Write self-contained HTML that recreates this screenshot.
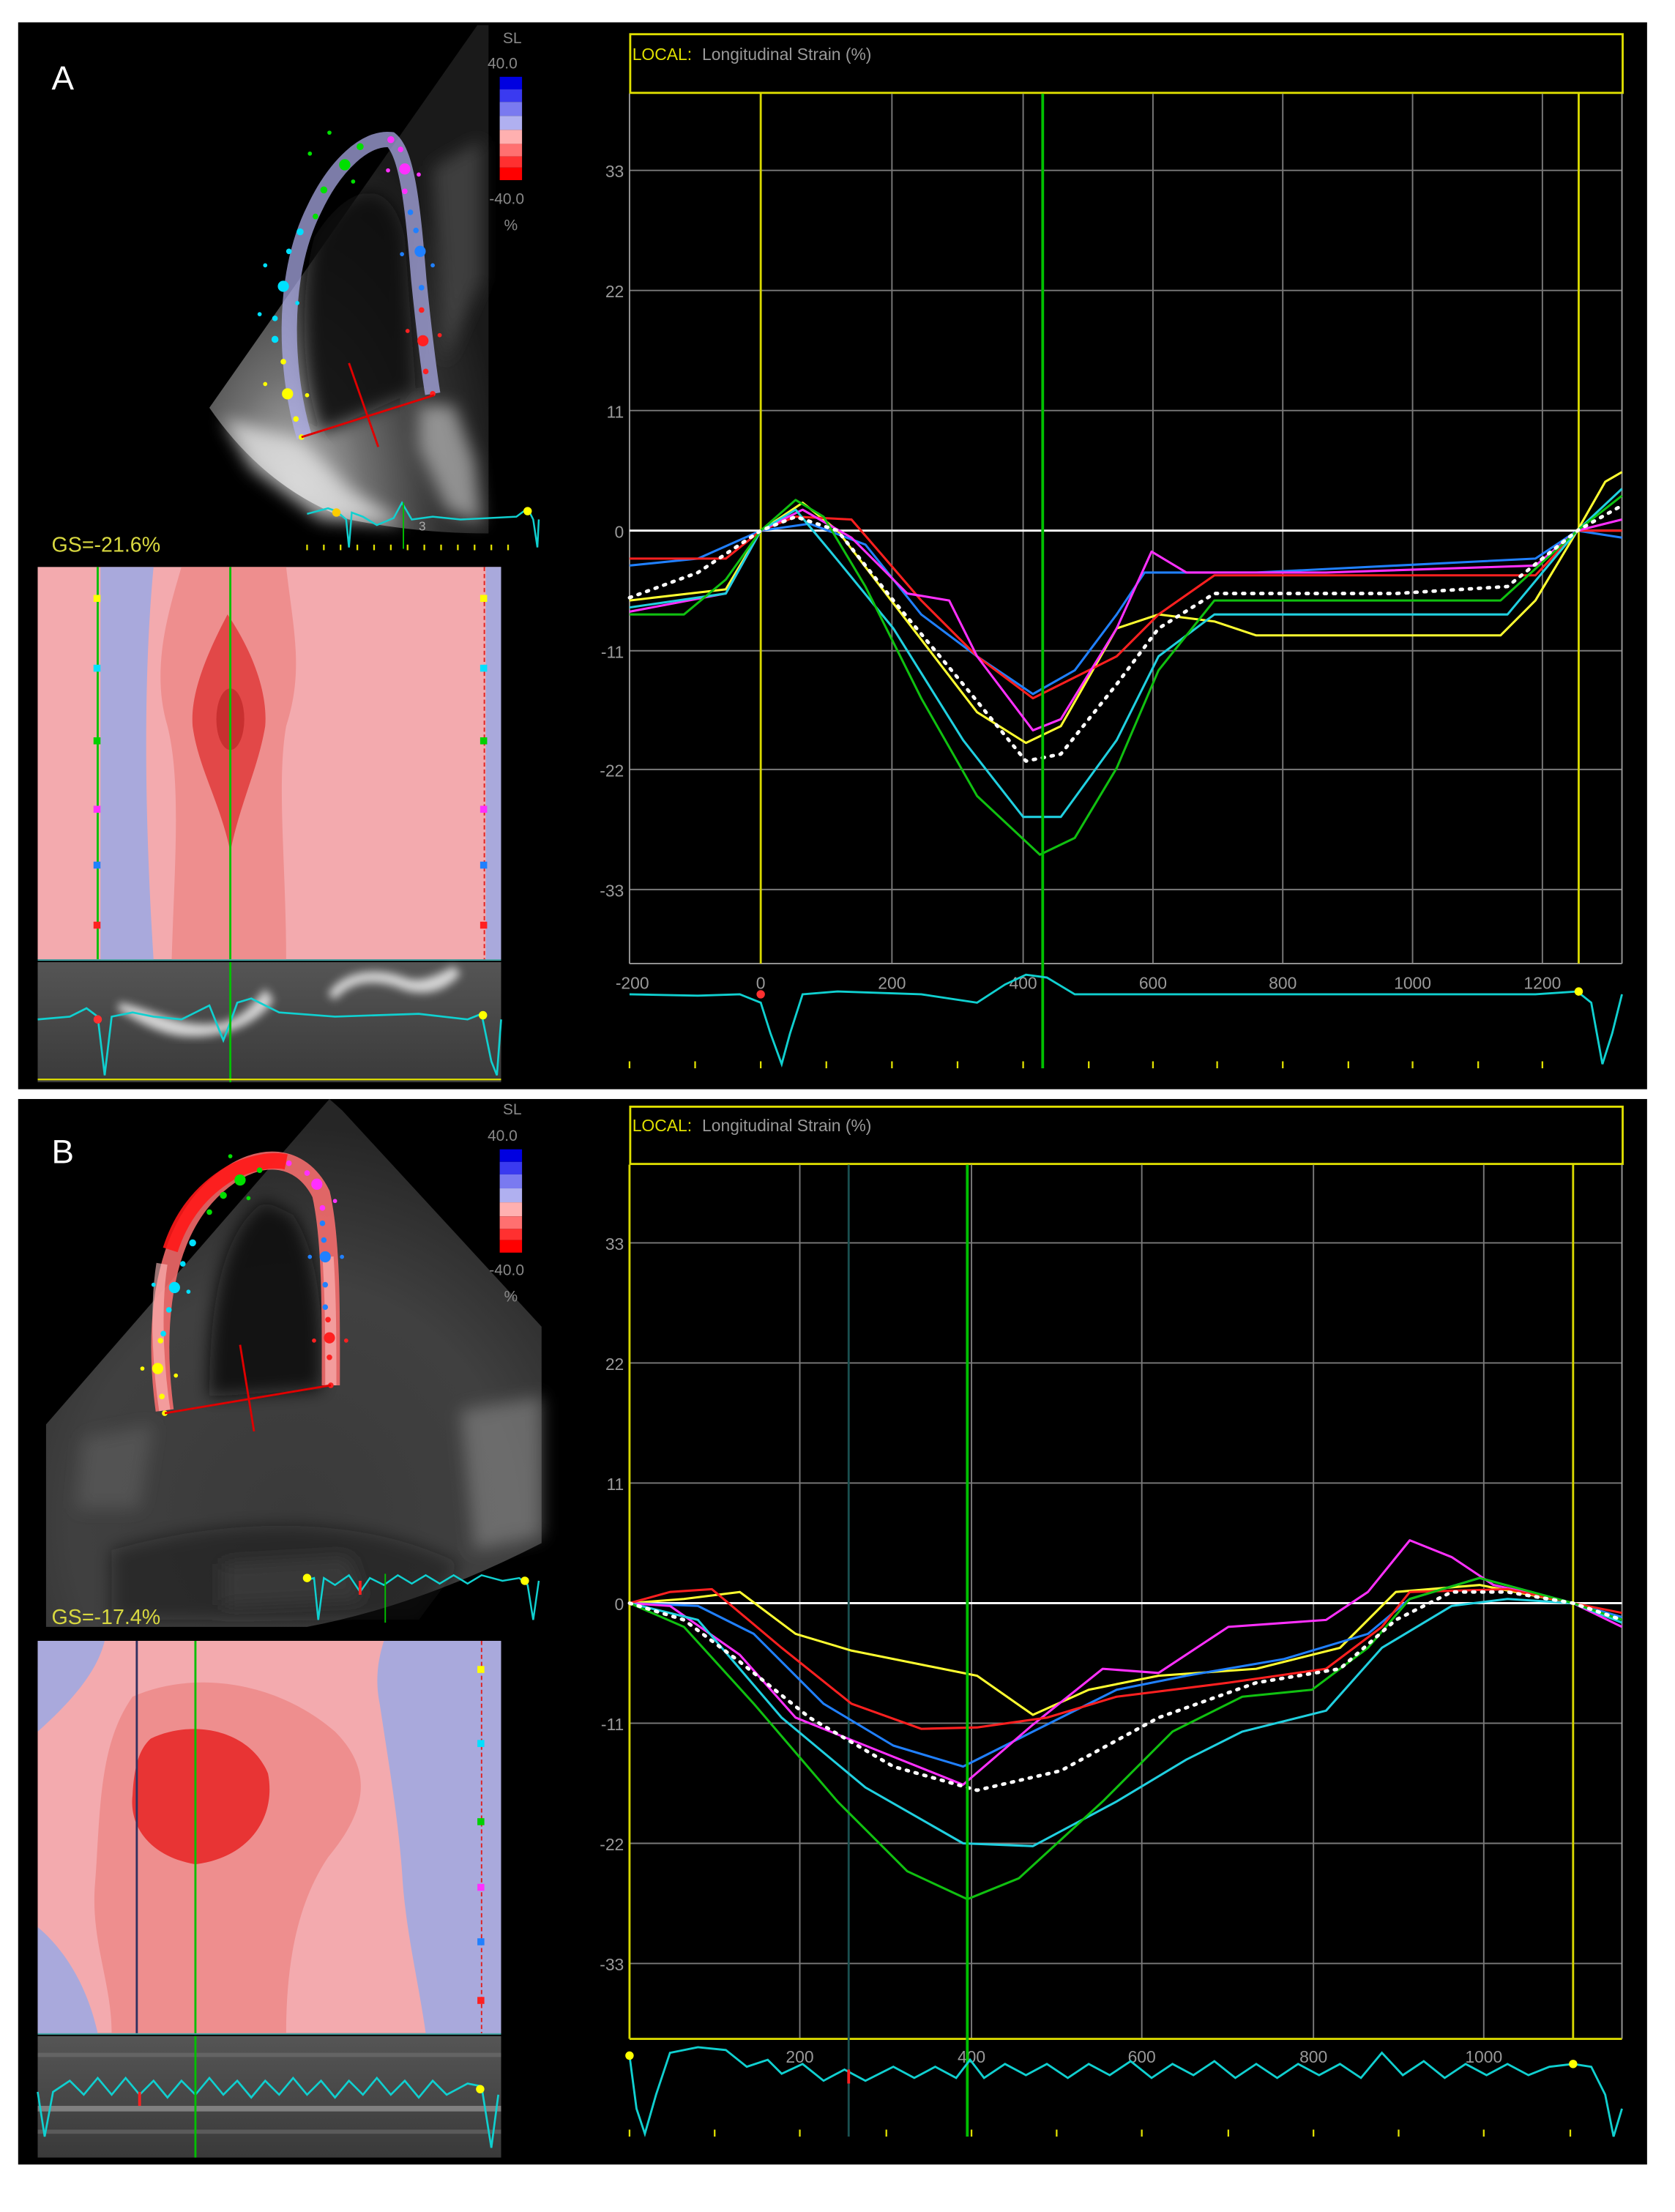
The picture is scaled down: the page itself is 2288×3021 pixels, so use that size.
<!DOCTYPE html>
<html><head><meta charset="utf-8"><style>
html,body{margin:0;padding:0;background:#fff;}
svg{display:block;}
text{font-family:"Liberation Sans",sans-serif;}
</style></head><body>
<svg width="2288" height="3021" viewBox="0 0 1200 1584" preserveAspectRatio="none" xmlns="http://www.w3.org/2000/svg">
<defs>
<radialGradient id="echoA" cx="0.3" cy="0.95" r="0.75">
<stop offset="0" stop-color="#c8c8c8"/><stop offset="0.35" stop-color="#707070"/><stop offset="0.7" stop-color="#333"/><stop offset="1" stop-color="#1a1a1a"/></radialGradient>
<radialGradient id="echoB" cx="0.5" cy="0.8" r="0.75">
<stop offset="0" stop-color="#3a3a3a"/><stop offset="0.6" stop-color="#404040"/><stop offset="1" stop-color="#262626"/></radialGradient>
<linearGradient id="mm" x1="0" y1="0" x2="0" y2="1"><stop offset="0" stop-color="#555"/><stop offset="1" stop-color="#3a3a3a"/></linearGradient>
<filter id="blur3"><feGaussianBlur stdDeviation="3"/></filter>
<filter id="blur6"><feGaussianBlur stdDeviation="6"/></filter>
</defs>
<rect width="1200" height="1584" fill="#fff"/>
<rect x="13" y="16" width="1167" height="764" fill="#000"/>
<rect x="13" y="787" width="1167" height="763" fill="#000"/>

<!-- ===== A left ===== -->
<text x="37" y="64" font-family="Liberation Serif" font-size="24" fill="#fff">A</text>
<path d="M342,18 L350,18 L350,382 Q300,382 250,372 Q190,350 150,292 Z" fill="url(#echoA)"/>
<g filter="url(#blur6)">
<path d="M160,300 L215,315 L250,350 L290,375 L230,372 L180,335 Z" fill="#e0e0e0" opacity="0.8"/>
<path d="M300,290 L325,290 L340,330 L345,375 L320,365 L300,320 Z" fill="#bbb" opacity="0.7"/>
<path d="M225,170 C250,130 280,125 290,170 L298,280 L230,310 C215,270 215,210 225,170 Z" fill="#0c0c0c" opacity="0.9"/>
<path d="M310,120 L345,100 L345,200 L318,260 Z" fill="#555" opacity="0.6"/>
</g>
<path d="M218,313 C205,270 200,200 225,150 C240,118 262,98 280,100 C292,110 296,150 300,200 C304,240 308,270 310,282" fill="none" stroke="#b0b0f0" stroke-width="11" opacity="0.7"/>
<g fill="#00e000"><circle cx="247" cy="118" r="4"/><circle cx="232" cy="136" r="2.5"/><circle cx="258" cy="105" r="2.5"/><circle cx="226" cy="155" r="2"/><circle cx="236" cy="95" r="1.5"/><circle cx="222" cy="110" r="1.5"/><circle cx="253" cy="130" r="1.5"/></g>
<g fill="#ff30ff"><circle cx="290" cy="121" r="4"/><circle cx="280" cy="100" r="2.5"/><circle cx="287" cy="107" r="2"/><circle cx="290" cy="137" r="2"/><circle cx="300" cy="125" r="1.5"/><circle cx="278" cy="122" r="1.5"/></g>
<g fill="#00e0ff"><circle cx="203" cy="205" r="4"/><circle cx="215" cy="166" r="2.5"/><circle cx="207" cy="180" r="2"/><circle cx="197" cy="228" r="2"/><circle cx="197" cy="243" r="2.5"/><circle cx="190" cy="190" r="1.5"/><circle cx="186" cy="225" r="1.5"/><circle cx="213" cy="217" r="1.5"/></g>
<g fill="#2080ff"><circle cx="301" cy="180" r="4"/><circle cx="294" cy="152" r="2"/><circle cx="298" cy="165" r="2"/><circle cx="302" cy="206" r="2"/><circle cx="310" cy="190" r="1.5"/><circle cx="288" cy="182" r="1.5"/></g>
<g fill="#ff2020"><circle cx="303" cy="244" r="4"/><circle cx="302" cy="222" r="2"/><circle cx="305" cy="266" r="2"/><circle cx="310" cy="282" r="2"/><circle cx="292" cy="237" r="1.5"/><circle cx="315" cy="240" r="1.5"/></g>
<g fill="#ffff00"><circle cx="206" cy="282" r="4"/><circle cx="203" cy="259" r="2"/><circle cx="212" cy="300" r="2"/><circle cx="216" cy="313" r="2"/><circle cx="190" cy="275" r="1.5"/><circle cx="220" cy="283" r="1.5"/></g>
<line x1="216" y1="313" x2="311" y2="283" stroke="#e00000" stroke-width="1.5"/>
<line x1="250" y1="260" x2="271" y2="320" stroke="#e00000" stroke-width="1.5"/>
<text x="367" y="31" font-size="11" fill="#888" text-anchor="middle">SL</text>
<text x="360" y="49" font-size="11" fill="#888" text-anchor="middle">40.0</text>
<rect x="358" y="55" width="16" height="9" fill="#0000e0"/><rect x="358" y="64" width="16" height="9" fill="#3a3af0"/><rect x="358" y="73" width="16" height="10" fill="#7a7af0"/><rect x="358" y="83" width="16" height="10" fill="#b0b0f0"/>
<rect x="358" y="93" width="16" height="10" fill="#ffb0b0"/><rect x="358" y="103" width="16" height="9" fill="#ff7070"/><rect x="358" y="112" width="16" height="8" fill="#ff3030"/><rect x="358" y="120" width="16" height="9" fill="#ff0000"/>
<text x="363" y="146" font-size="11" fill="#888" text-anchor="middle">-40.0</text>
<text x="366" y="165" font-size="11" fill="#888" text-anchor="middle">%</text>
<polyline points="220,368 235,364 241,366 248,372 250,392 252,367 260,370 270,376 282,371 288,360 295,372 310,370 330,372 370,370 378,364 382,372 385,392 386,372" fill="none" stroke="#10d0d0" stroke-width="1.3"/>
<line x1="289" y1="360" x2="289" y2="393" stroke="#00c000"/>
<text x="300" y="380" font-size="9" fill="#aaa">3</text>
<circle cx="241" cy="367" r="3" fill="#ffcc00"/><circle cx="378" cy="366" r="3" fill="#ffff00"/>
<g stroke="#e0e000" stroke-width="1.2"><line x1="220" y1="390" x2="220" y2="394"/><line x1="232" y1="390" x2="232" y2="394"/><line x1="244" y1="390" x2="244" y2="394"/><line x1="256" y1="390" x2="256" y2="394"/><line x1="268" y1="390" x2="268" y2="394"/><line x1="280" y1="390" x2="280" y2="394"/><line x1="292" y1="390" x2="292" y2="394"/><line x1="304" y1="390" x2="304" y2="394"/><line x1="316" y1="390" x2="316" y2="394"/><line x1="328" y1="390" x2="328" y2="394"/><line x1="340" y1="390" x2="340" y2="394"/><line x1="352" y1="390" x2="352" y2="394"/><line x1="364" y1="390" x2="364" y2="394"/></g>
<text x="37" y="395" font-size="15" fill="#d8d840">GS=-21.6%</text>

<!-- strain map A -->
<rect x="27" y="406" width="332" height="281" fill="#f3aaae"/>
<path d="M72,406 L110,406 C104,470 102,560 110,687 L72,687 Z" fill="#a9a9dc"/>
<rect x="348" y="406" width="11" height="281" fill="#a9a9dc"/>
<path d="M130,406 L205,406 C210,450 218,480 205,520 C198,560 205,620 205,687 L123,687 C125,620 130,560 120,520 C108,480 120,440 130,406 Z" fill="#ee8e8e"/>
<path d="M163,440 C180,465 192,495 190,520 C185,550 172,575 165,610 C158,575 142,550 138,520 C136,495 150,465 163,440 Z" fill="#e24848"/>
<ellipse cx="165" cy="515" rx="10" ry="22" fill="#c83030"/>
<line x1="70" y1="406" x2="70" y2="687" stroke="#00c000" stroke-width="1.5"/>
<line x1="165" y1="406" x2="165" y2="687" stroke="#00c000" stroke-width="1.5"/>
<line x1="347" y1="406" x2="347" y2="687" stroke="#e02020" stroke-dasharray="3,2"/>
<g><rect x="67" y="426" width="5" height="5" fill="#ffff00"/><rect x="67" y="476" width="5" height="5" fill="#00e0ff"/><rect x="67" y="528" width="5" height="5" fill="#00d000"/><rect x="67" y="577" width="5" height="5" fill="#ff30ff"/><rect x="67" y="617" width="5" height="5" fill="#2080ff"/><rect x="67" y="660" width="5" height="5" fill="#ff2020"/>
<rect x="344" y="426" width="5" height="5" fill="#ffff00"/><rect x="344" y="476" width="5" height="5" fill="#00e0ff"/><rect x="344" y="528" width="5" height="5" fill="#00d000"/><rect x="344" y="577" width="5" height="5" fill="#ff30ff"/><rect x="344" y="617" width="5" height="5" fill="#2080ff"/><rect x="344" y="660" width="5" height="5" fill="#ff2020"/></g>
<rect x="27" y="687" width="332" height="1" fill="#4aa"/>
<!-- mmode A -->
<rect x="27" y="689" width="332" height="86" fill="url(#mm)"/>
<g filter="url(#blur3)" opacity="0.85">
<path d="M85,718 C110,722 130,738 160,732 C175,728 182,718 190,708 L196,716 C185,735 150,748 120,740 C100,734 92,726 85,724 Z" fill="#eee"/>
<path d="M235,712 C245,695 270,692 290,700 C300,704 310,700 325,692 L330,697 C318,712 300,714 285,707 C265,700 250,704 240,716 Z" fill="#eee"/>
</g>
<polyline points="27,730 50,728 62,722 70,728 75,770 80,728 95,725 110,728 130,730 150,720 160,745 165,732 170,718 180,715 200,725 240,728 300,726 335,730 345,726 352,760 356,770 359,730" fill="none" stroke="#10d0d0" stroke-width="1.4"/>
<line x1="165" y1="689" x2="165" y2="775" stroke="#00c000" stroke-width="1.5"/>
<circle cx="70" cy="730" r="3" fill="#ff3030"/><circle cx="346" cy="727" r="3" fill="#ffff00"/>
<line x1="27" y1="773" x2="359" y2="773" stroke="#e0e000" stroke-width="1.2"/>

<!-- ===== A chart ===== -->
<rect x="451.5" y="24.5" width="711" height="42" fill="none" stroke="#e0e000" stroke-width="1.5"/>
<text x="453" y="43" font-size="12" fill="#e0e000">LOCAL:</text>
<text x="503" y="43" font-size="12" fill="#999">Longitudinal Strain (%)</text>
<g stroke="#7a7a7a" stroke-width="1">
<line x1="451" y1="122" x2="1162" y2="122"/><line x1="451" y1="208" x2="1162" y2="208"/><line x1="451" y1="294" x2="1162" y2="294"/><line x1="451" y1="466" x2="1162" y2="466"/><line x1="451" y1="551" x2="1162" y2="551"/><line x1="451" y1="637" x2="1162" y2="637"/>
<line x1="639" y1="67" x2="639" y2="690"/><line x1="733" y1="67" x2="733" y2="690"/><line x1="826" y1="67" x2="826" y2="690"/><line x1="919" y1="67" x2="919" y2="690"/><line x1="1012" y1="67" x2="1012" y2="690"/><line x1="1105" y1="67" x2="1105" y2="690"/>
</g>
<line x1="451" y1="67" x2="451" y2="690" stroke="#999"/>
<line x1="1162" y1="67" x2="1162" y2="690" stroke="#999"/>
<line x1="451" y1="690" x2="1162" y2="690" stroke="#999"/>
<line x1="451" y1="380" x2="1162" y2="380" stroke="#fff" stroke-width="1.5"/>
<g font-size="12" fill="#999" text-anchor="end"><text x="447" y="127">33</text><text x="447" y="213">22</text><text x="447" y="299">11</text><text x="447" y="385">0</text><text x="447" y="471">-11</text><text x="447" y="556">-22</text><text x="447" y="642">-33</text></g>
<g font-size="12" fill="#999" text-anchor="middle"><text x="453" y="708">-200</text><text x="545" y="708">0</text><text x="639" y="708">200</text><text x="733" y="708">400</text><text x="826" y="708">600</text><text x="919" y="708">800</text><text x="1012" y="708">1000</text><text x="1105" y="708">1200</text></g>
<line x1="545" y1="67" x2="545" y2="690" stroke="#d8d800" stroke-width="1.5"/>
<line x1="1131" y1="67" x2="1131" y2="690" stroke="#d8d800" stroke-width="1.5"/>
<g fill="none" stroke-width="1.6" stroke-linejoin="round">
<polyline stroke="#ffff30" points="451,430 520,422 545,380 575,360 600,380 650,445 700,510 735,532 760,520 800,450 830,440 870,445 900,455 1075,455 1100,430 1130,380 1150,345 1162,338"/>
<polyline stroke="#2080ff" points="451,405 500,400 545,380 580,375 620,390 660,440 700,470 740,497 770,480 800,440 820,410 900,410 1000,405 1100,400 1130,380 1162,385"/>
<polyline stroke="#ff2020" points="451,400 520,400 545,380 570,370 610,372 660,430 700,470 740,500 770,485 800,470 830,440 870,412 1100,412 1130,380 1162,380"/>
<polyline stroke="#ff30ff" points="451,438 520,425 545,380 575,365 610,385 650,425 680,430 700,470 740,523 760,515 800,450 825,395 850,410 950,410 1100,405 1130,380 1162,372"/>
<polyline stroke="#20d0e0" points="451,435 520,425 545,380 570,365 595,395 640,450 690,530 733,585 760,585 800,530 830,470 870,440 1080,440 1130,380 1162,350"/>
<polyline stroke="#10c010" points="451,440 490,440 520,415 545,380 570,358 590,370 620,420 660,500 700,570 745,612 770,600 800,550 830,480 870,430 900,430 1075,430 1130,380 1162,355"/>
<polyline stroke="#fff" stroke-width="2.5" stroke-dasharray="1.5,5" stroke-linecap="round" points="451,428 500,410 545,380 570,370 600,380 640,430 690,490 735,545 760,540 800,490 830,450 870,425 1000,425 1080,420 1130,380 1162,362"/>
</g>
<line x1="747" y1="67" x2="747" y2="765" stroke="#00c000" stroke-width="2"/>
<polyline points="451,712 500,713 530,712 545,718 552,740 560,762 566,740 575,712 600,710 660,712 700,718 720,705 735,698 750,700 770,712 800,712 900,712 1000,712 1100,712 1130,710 1140,718 1148,762 1155,740 1162,712" fill="none" stroke="#10d0d0" stroke-width="1.5"/>
<circle cx="545" cy="712" r="3" fill="#ff3030"/><circle cx="1131" cy="710" r="3" fill="#ffff00"/>
<g stroke="#e0e000" stroke-width="1.2"><line x1="451" y1="760" x2="451" y2="765"/><line x1="498" y1="760" x2="498" y2="765"/><line x1="545" y1="760" x2="545" y2="765"/><line x1="592" y1="760" x2="592" y2="765"/><line x1="639" y1="760" x2="639" y2="765"/><line x1="686" y1="760" x2="686" y2="765"/><line x1="733" y1="760" x2="733" y2="765"/><line x1="780" y1="760" x2="780" y2="765"/><line x1="826" y1="760" x2="826" y2="765"/><line x1="872" y1="760" x2="872" y2="765"/><line x1="919" y1="760" x2="919" y2="765"/><line x1="966" y1="760" x2="966" y2="765"/><line x1="1012" y1="760" x2="1012" y2="765"/><line x1="1059" y1="760" x2="1059" y2="765"/><line x1="1105" y1="760" x2="1105" y2="765"/></g>

<!-- ===== B left ===== -->
<text x="37" y="833" font-family="Liberation Serif" font-size="24" fill="#fff">B</text>
<path d="M236,787 L245,795 L388,950 L388,1105 Q300,1150 220,1165 L33,1165 L33,1020 Z" fill="url(#echoB)"/>
<g filter="url(#blur6)">
<path d="M330,1010 L388,1000 L388,1100 L340,1110 Z" fill="#888" opacity="0.6"/>
<path d="M60,1030 L110,1020 L100,1080 L55,1080 Z" fill="#666" opacity="0.5"/>
<path d="M160,1120 L250,1115 L260,1145 L160,1150 Z" fill="#888" opacity="0.45"/>
<path d="M150,1000 C150,930 160,880 190,860 L210,870 C230,900 232,950 230,995 Z" fill="#0d0d0d" opacity="0.9"/>
<path d="M80,1110 C150,1090 250,1080 330,1120 L300,1160 L80,1160 Z" fill="#111" opacity="0.5"/>
</g>
<path d="M118,1010 C110,950 115,880 160,845 C185,825 215,825 230,855 C238,890 237,950 237,992" fill="none" stroke="#ff7070" stroke-width="13" opacity="0.85"/>
<path d="M118,1010 C112,970 112,930 116,905" fill="none" stroke="#ffc0c0" stroke-width="8" opacity="0.6"/>
<path d="M237,992 C237,960 237,930 235,900" fill="none" stroke="#ffc0c0" stroke-width="8" opacity="0.6"/>
<path d="M122,895 C130,870 145,852 165,840 C180,832 195,830 205,832" fill="none" stroke="#ff1818" stroke-width="11" opacity="0.9"/>
<g fill="#00e000"><circle cx="172" cy="845" r="4"/><circle cx="160" cy="856" r="2.5"/><circle cx="186" cy="838" r="2"/><circle cx="150" cy="868" r="2"/><circle cx="165" cy="828" r="1.5"/><circle cx="178" cy="858" r="1.5"/></g>
<g fill="#ff30ff"><circle cx="227" cy="848" r="4"/><circle cx="207" cy="833" r="2"/><circle cx="220" cy="840" r="2"/><circle cx="231" cy="865" r="2"/><circle cx="240" cy="860" r="1.5"/></g>
<g fill="#00e0ff"><circle cx="125" cy="922" r="4"/><circle cx="138" cy="890" r="2.5"/><circle cx="131" cy="905" r="2"/><circle cx="121" cy="938" r="2"/><circle cx="117" cy="955" r="2"/><circle cx="110" cy="920" r="1.5"/><circle cx="135" cy="925" r="1.5"/></g>
<g fill="#2080ff"><circle cx="233" cy="900" r="4"/><circle cx="231" cy="876" r="2"/><circle cx="232" cy="888" r="2"/><circle cx="233" cy="920" r="2"/><circle cx="233" cy="936" r="2"/><circle cx="222" cy="900" r="1.5"/><circle cx="245" cy="900" r="1.5"/></g>
<g fill="#ff2020"><circle cx="236" cy="958" r="4"/><circle cx="235" cy="945" r="2"/><circle cx="236" cy="972" r="2"/><circle cx="237" cy="992" r="2"/><circle cx="225" cy="960" r="1.5"/><circle cx="248" cy="960" r="1.5"/></g>
<g fill="#ffff00"><circle cx="113" cy="980" r="4"/><circle cx="115" cy="960" r="2"/><circle cx="116" cy="1000" r="2"/><circle cx="118" cy="1012" r="2"/><circle cx="102" cy="980" r="1.5"/><circle cx="126" cy="985" r="1.5"/></g>
<line x1="118" y1="1012" x2="237" y2="992" stroke="#e00000" stroke-width="1.5"/>
<line x1="172" y1="963" x2="182" y2="1025" stroke="#e00000" stroke-width="1.5"/>
<text x="367" y="798" font-size="11" fill="#888" text-anchor="middle">SL</text>
<text x="360" y="817" font-size="11" fill="#888" text-anchor="middle">40.0</text>
<rect x="358" y="823" width="16" height="9" fill="#0000e0"/><rect x="358" y="832" width="16" height="9" fill="#3a3af0"/><rect x="358" y="841" width="16" height="10" fill="#7a7af0"/><rect x="358" y="851" width="16" height="10" fill="#b0b0f0"/>
<rect x="358" y="861" width="16" height="10" fill="#ffb0b0"/><rect x="358" y="871" width="16" height="9" fill="#ff7070"/><rect x="358" y="880" width="16" height="8" fill="#ff3030"/><rect x="358" y="888" width="16" height="9" fill="#ff0000"/>
<text x="363" y="913" font-size="11" fill="#888" text-anchor="middle">-40.0</text>
<text x="366" y="932" font-size="11" fill="#888" text-anchor="middle">%</text>
<polyline points="218,1132 225,1130 228,1160 232,1130 240,1135 250,1128 258,1140 265,1130 275,1135 285,1128 295,1134 305,1128 315,1134 325,1128 335,1134 345,1128 360,1132 372,1130 378,1135 382,1160 386,1132" fill="none" stroke="#10d0d0" stroke-width="1.3"/>
<line x1="276" y1="1127" x2="276" y2="1162" stroke="#00c000"/>
<line x1="258" y1="1132" x2="258" y2="1142" stroke="#ff2020" stroke-width="2"/>
<circle cx="220" cy="1130" r="3" fill="#ffff00"/><circle cx="376" cy="1132" r="3" fill="#ffff00"/>
<text x="37" y="1163" font-size="15" fill="#d8d840">GS=-17.4%</text>

<!-- strain map B -->
<rect x="27" y="1175" width="332" height="281" fill="#f3aaae"/>
<path d="M27,1175 L75,1175 C70,1195 55,1215 27,1240 Z" fill="#a9a9dc"/>
<path d="M27,1380 C45,1395 62,1420 70,1456 L27,1456 Z" fill="#a9a9dc"/>
<path d="M275,1175 L359,1175 L359,1456 L305,1456 C300,1420 290,1380 288,1340 C285,1300 278,1260 272,1220 C268,1200 272,1185 275,1175 Z" fill="#a9a9dc"/>
<path d="M95,1215 C140,1195 200,1205 240,1240 C270,1270 260,1300 235,1330 C215,1360 205,1400 205,1456 L80,1456 C80,1420 65,1390 68,1350 C72,1300 70,1250 95,1215 Z" fill="#ee8e8e"/>
<path d="M108,1245 C140,1230 180,1240 192,1270 C198,1300 180,1330 140,1335 C110,1330 92,1310 95,1285 C96,1265 100,1252 108,1245 Z" fill="#e83434"/>
<line x1="98" y1="1175" x2="98" y2="1456" stroke="#303060" stroke-width="1.5"/>
<line x1="140" y1="1175" x2="140" y2="1456" stroke="#00c000" stroke-width="1.5"/>
<line x1="345" y1="1175" x2="345" y2="1456" stroke="#e02020" stroke-dasharray="3,2"/>
<g><rect x="342" y="1193" width="5" height="5" fill="#ffff00"/><rect x="342" y="1246" width="5" height="5" fill="#00e0ff"/><rect x="342" y="1302" width="5" height="5" fill="#00d000"/><rect x="342" y="1349" width="5" height="5" fill="#ff30ff"/><rect x="342" y="1388" width="5" height="5" fill="#2080ff"/><rect x="342" y="1430" width="5" height="5" fill="#ff2020"/></g>
<rect x="27" y="1456" width="332" height="1" fill="#4aa"/>
<!-- mmode B -->
<rect x="27" y="1458" width="332" height="87" fill="url(#mm)"/>
<g opacity="0.5"><rect x="27" y="1470" width="332" height="3" fill="#777"/><rect x="27" y="1508" width="332" height="4" fill="#bbb"/><rect x="27" y="1525" width="332" height="3" fill="#777"/></g>
<polyline points="27,1498 32,1530 38,1498 50,1490 60,1500 70,1488 80,1500 90,1488 100,1500 110,1490 120,1502 130,1490 140,1500 150,1488 160,1500 170,1490 180,1502 190,1490 200,1500 210,1488 220,1500 230,1490 240,1502 250,1490 260,1500 270,1488 280,1500 290,1490 300,1502 310,1490 320,1500 335,1492 345,1494 352,1538 357,1500" fill="none" stroke="#10d0d0" stroke-width="1.4"/>
<line x1="140" y1="1458" x2="140" y2="1545" stroke="#00c000" stroke-width="1.5"/>
<line x1="100" y1="1498" x2="100" y2="1508" stroke="#ff2020" stroke-width="2"/>
<circle cx="344" cy="1496" r="3" fill="#ffff00"/>

<!-- ===== B chart ===== -->
<rect x="451.5" y="792.5" width="711" height="41" fill="none" stroke="#e0e000" stroke-width="1.5"/>
<text x="453" y="810" font-size="12" fill="#e0e000">LOCAL:</text>
<text x="503" y="810" font-size="12" fill="#999">Longitudinal Strain (%)</text>
<g stroke="#7a7a7a" stroke-width="1">
<line x1="451" y1="890" x2="1162" y2="890"/><line x1="451" y1="976" x2="1162" y2="976"/><line x1="451" y1="1062" x2="1162" y2="1062"/><line x1="451" y1="1234" x2="1162" y2="1234"/><line x1="451" y1="1320" x2="1162" y2="1320"/><line x1="451" y1="1406" x2="1162" y2="1406"/>
<line x1="573" y1="834" x2="573" y2="1460"/><line x1="696" y1="834" x2="696" y2="1460"/><line x1="818" y1="834" x2="818" y2="1460"/><line x1="941" y1="834" x2="941" y2="1460"/><line x1="1063" y1="834" x2="1063" y2="1460"/>
</g>
<line x1="1162" y1="834" x2="1162" y2="1460" stroke="#999"/>
<line x1="451" y1="1460" x2="1162" y2="1460" stroke="#d8d800" stroke-width="1.5"/>
<line x1="451" y1="1148" x2="1162" y2="1148" stroke="#fff" stroke-width="1.5"/>
<g font-size="12" fill="#999" text-anchor="end"><text x="447" y="895">33</text><text x="447" y="981">22</text><text x="447" y="1067">11</text><text x="447" y="1153">0</text><text x="447" y="1239">-11</text><text x="447" y="1325">-22</text><text x="447" y="1411">-33</text></g>
<g font-size="12" fill="#999" text-anchor="middle"><text x="573" y="1477">200</text><text x="696" y="1477">400</text><text x="818" y="1477">600</text><text x="941" y="1477">800</text><text x="1063" y="1477">1000</text></g>
<line x1="451" y1="834" x2="451" y2="1460" stroke="#d8d800" stroke-width="1.5"/>
<line x1="1127" y1="834" x2="1127" y2="1460" stroke="#d8d800" stroke-width="1.5"/>
<line x1="608" y1="834" x2="608" y2="1530" stroke="#1a5050" stroke-width="1.5"/>
<g fill="none" stroke-width="1.6" stroke-linejoin="round">
<polyline stroke="#ffff30" points="451,1148 490,1145 530,1140 570,1170 610,1182 660,1192 700,1200 740,1228 780,1210 830,1200 900,1195 960,1180 1000,1140 1060,1135 1127,1148 1162,1158"/>
<polyline stroke="#2080ff" points="451,1148 500,1150 540,1170 590,1220 640,1250 690,1265 740,1240 800,1210 850,1200 920,1188 980,1170 1010,1145 1060,1130 1127,1148 1162,1158"/>
<polyline stroke="#ff30ff" points="451,1148 480,1150 530,1185 570,1230 620,1250 690,1278 740,1235 790,1195 830,1198 880,1165 950,1160 980,1140 1010,1103 1040,1115 1070,1135 1127,1148 1162,1165"/>
<polyline stroke="#ff2020" points="451,1148 480,1140 510,1138 560,1180 610,1220 660,1238 700,1237 750,1230 800,1215 880,1205 950,1195 990,1165 1010,1140 1080,1138 1127,1148 1162,1155"/>
<polyline stroke="#20d0e0" points="451,1148 500,1160 560,1230 620,1280 690,1320 740,1322 800,1290 850,1260 890,1240 950,1225 990,1180 1040,1150 1080,1145 1127,1148 1162,1162"/>
<polyline stroke="#10c010" points="451,1148 490,1165 540,1220 600,1290 650,1340 693,1360 730,1345 790,1290 840,1240 890,1215 940,1210 980,1180 1010,1145 1060,1130 1127,1148 1162,1160"/>
<polyline stroke="#fff" stroke-width="2.5" stroke-dasharray="1.5,5" stroke-linecap="round" points="451,1148 490,1160 530,1190 580,1230 640,1265 700,1282 760,1268 830,1230 900,1205 960,1195 1000,1160 1040,1140 1080,1140 1127,1148 1162,1160"/>
</g>
<line x1="693" y1="834" x2="693" y2="1530" stroke="#00c000" stroke-width="2"/>
<polyline points="451,1472 456,1510 462,1528 470,1500 480,1470 500,1466 520,1468 535,1480 550,1475 560,1485 575,1478 590,1490 605,1482 620,1490 640,1480 655,1488 670,1480 685,1488 695,1475 705,1488 720,1478 735,1486 750,1478 765,1488 780,1478 795,1486 810,1476 825,1488 840,1478 855,1486 870,1476 885,1488 900,1478 915,1488 930,1478 945,1486 960,1478 975,1488 990,1470 1005,1486 1020,1476 1035,1488 1050,1478 1065,1486 1080,1478 1095,1486 1110,1480 1127,1478 1140,1480 1150,1500 1156,1530 1162,1510" fill="none" stroke="#10d0d0" stroke-width="1.5"/>
<circle cx="451" cy="1472" r="3" fill="#ffff00"/><circle cx="1127" cy="1478" r="3" fill="#ffff00"/>
<line x1="608" y1="1482" x2="608" y2="1492" stroke="#ff2020" stroke-width="2"/>
<g stroke="#e0e000" stroke-width="1.2"><line x1="451" y1="1525" x2="451" y2="1530"/><line x1="512" y1="1525" x2="512" y2="1530"/><line x1="573" y1="1525" x2="573" y2="1530"/><line x1="635" y1="1525" x2="635" y2="1530"/><line x1="696" y1="1525" x2="696" y2="1530"/><line x1="757" y1="1525" x2="757" y2="1530"/><line x1="818" y1="1525" x2="818" y2="1530"/><line x1="880" y1="1525" x2="880" y2="1530"/><line x1="941" y1="1525" x2="941" y2="1530"/><line x1="1002" y1="1525" x2="1002" y2="1530"/><line x1="1063" y1="1525" x2="1063" y2="1530"/><line x1="1125" y1="1525" x2="1125" y2="1530"/></g>
</svg>
</body></html>
